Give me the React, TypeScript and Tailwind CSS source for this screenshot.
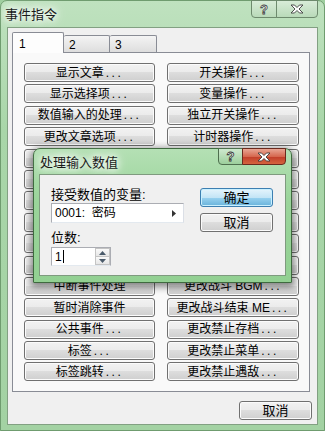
import React from "react";

const left = [
  "显示文章...",
  "显示选择项...",
  "数值输入的处理...",
  "更改文章选项...",
  "按键输入的处理...",
  "等待...",
  "注释...",
  "条件分歧...",
  "循环",
  "中断循环",
  "中断事件处理",
  "暂时消除事件",
  "公共事件...",
  "标签...",
  "标签跳转...",
];
const right = [
  "开关操作...",
  "变量操作...",
  "独立开关操作...",
  "计时器操作...",
  "增减金钱...",
  "增减物品...",
  "增减武器...",
  "增减防具...",
  "替换队员...",
  "更改窗口外观...",
  "更改战斗 BGM...",
  "更改战斗结束 ME...",
  "更改禁止存档...",
  "更改禁止菜单...",
  "更改禁止遇敌...",
];

function Label({ text }: { text: string }) {
  if (text.endsWith("...")) {
    return (
      <span className="whitespace-nowrap">
        {text.slice(0, -3)}
        <span className="tracking-[2.5px] ml-[2px]">...</span>
      </span>
    );
  }
  return <span className="whitespace-nowrap">{text}</span>;
}

function Btn({ text, className = "" }: { text: string; className?: string }) {
  return (
    <div
      className={
        "flex items-center justify-center rounded-[3px] border border-[#707070] bg-[linear-gradient(#f2f2f2_0%,#ebebeb_48%,#dddddd_50%,#cfcfcf_100%)] shadow-[inset_0_0_0_1px_#fbfbfb] text-[12px] leading-none text-black " +
        className
      }
    >
      <Label text={text} />
    </div>
  );
}

function XIcon({ w, h }: { w: number; h: number }) {
  return (
    <svg width={w} height={h} viewBox="0 0 14 10">
      <polygon
        points="1,1 4.5,1 7,3.5 9.5,1 13,1 9,5 13,9 9.5,9 7,6.5 4.5,9 1,9 5,5"
        fill="#ffffff"
        stroke="#3d3d3d"
        strokeWidth="0.9"
        strokeLinejoin="round"
      />
    </svg>
  );
}

function Tri({ dir }: { dir: "up" | "down" | "right" }) {
  if (dir === "right")
    return (
      <svg width="4" height="7" viewBox="0 0 4 7">
        <polygon points="0,0 4,3.5 0,7" fill="#333" />
      </svg>
    );
  return (
    <svg width="7" height="4" viewBox="0 0 7 4">
      <polygon points={dir === "up" ? "0,4 3.5,0 7,4" : "0,0 7,0 3.5,4"} fill="#4a5a6a" />
    </svg>
  );
}

export default function App() {
  return (
    <div className="relative w-[325px] h-[431px] overflow-hidden bg-[#9fcf9f] font-['Liberation_Sans','Noto_Sans_CJK_SC',sans-serif]">
      {/* Outer window */}
      <div className="flex flex-col w-full h-full rounded-t-[7px] border border-[#6f9c6f] bg-[linear-gradient(180deg,#bfe2bf_0%,#a9d6a9_30%,#a3d2a3_100%)] px-[6px] pb-[5px]">
        {/* title bar */}
        <div className="flex h-[26px] shrink-0">
          <div className="pl-[-2px] -ml-[2px] pt-[6px] text-[13px] leading-[16px] text-[#1a1a1a] [text-shadow:0_0_6px_#ffffff,0_0_10px_#ffffff,0_0_14px_#ffffff]">
            事件指令
          </div>
          <div className="ml-auto -mt-[1px] flex h-[18px]">
            <div className="flex w-[26px] items-center justify-center rounded-bl-[4px] border border-[#6d8a6d] bg-[linear-gradient(#d8ecd8,#b9dab9)] text-[13px] font-bold leading-none text-white [-webkit-text-stroke:0.8px_#444]">
              ?
            </div>
            <div className="-ml-[1px] flex w-[42px] items-center justify-center rounded-br-[4px] border border-[#6d8a6d] bg-[linear-gradient(#d8ecd8,#b9dab9)]">
              <XIcon w={14} h={10} />
            </div>
          </div>
        </div>
        {/* client */}
        <div className="flex flex-1 flex-col border border-[#82a082] bg-[#f0f0f0] pl-[4px]">
          {/* tabs */}
          <div className="mt-[4px] flex h-[21px] items-end text-[12px] leading-none text-black">
            <div className="relative z-10 h-[21px] w-[52px] rounded-t-[2px] border border-b-0 border-[#898c95] bg-[#fdfdfd] pl-[6px] pt-[5px]">
              1
            </div>
            <div className="h-[18px] w-[46px] rounded-t-[2px] border border-l-0 border-b-0 border-[#898c95] bg-[linear-gradient(#f4f4f4,#dcdcdc)] pl-[5px] pt-[3px]">
              2
            </div>
            <div className="h-[18px] w-[47px] rounded-t-[2px] border border-l-0 border-b-0 border-[#898c95] bg-[linear-gradient(#f4f4f4,#dcdcdc)] pl-[5px] pt-[3px]">
              3
            </div>
          </div>
          {/* panel */}
          <div className="relative -mt-[1px] h-[340px] w-[298px] border border-[#898c95] bg-[#f9f9f9] pl-[11px] pt-[10px]">
            <div className="grid grid-cols-[131px_132px] gap-x-[12px] gap-y-[2.4px]">
              {left.map((l, i) => (
                <React.Fragment key={i}>
                  <Btn text={l} className="h-[19px]" />
                  <Btn text={right[i]} className="h-[19px]" />
                </React.Fragment>
              ))}
            </div>
          </div>
          <div className="mt-[9px] flex justify-end pr-[5px]">
            <Btn text="取消" className="h-[19px] w-[73px] text-[13px]" />
          </div>
        </div>
      </div>

      {/* Dialog */}
      <div className="absolute left-[33px] top-[148px] flex h-[135px] w-[259px] flex-col rounded-t-[7px] border border-[#3f6a3f] bg-[linear-gradient(180deg,#b4e0b4_0%,#9ad49a_40%,#92d092_100%)] px-[5px] pb-[6px] shadow-[0_2px_7px_2px_rgba(0,0,0,0.45)]">
        <div className="flex h-[25px] shrink-0">
          <div className="pl-[1px] pt-[6px] text-[13px] leading-[16px] text-[#1a1a1a] [text-shadow:0_0_6px_#ffffff,0_0_10px_#ffffff,0_0_14px_#ffffff]">
            处理输入数值
          </div>
          <div className="ml-auto -mt-[1px] flex h-[17px]">
            <div className="flex w-[25px] items-center justify-center rounded-bl-[4px] border border-[#4f6f4f] bg-[linear-gradient(#cfe9cf,#9ccf9c)] text-[13px] font-bold leading-none text-white [-webkit-text-stroke:0.8px_#333]">
              ?
            </div>
            <div className="-ml-[1px] flex w-[44px] items-center justify-center rounded-br-[4px] border border-[#6b2a1e] bg-[linear-gradient(#e8a593_0%,#d6684f_50%,#c2402a_55%,#d5643f_100%)]">
              <XIcon w={14} h={10} />
            </div>
          </div>
        </div>
        <div className="flex flex-1 border border-[#7f9a7f] bg-[#f0f0f0] text-[13px] leading-none text-black">
          <div className="ml-[11px] flex w-[133px] flex-col pt-[12px]">
            <div className="h-[16px] leading-[16px]">接受数值的变量:</div>
            <div className="flex h-[20px] items-center border border-[#abadb3] border-b-[#e3e9ef] border-r-[#dbdfe6] bg-white pl-[3px] pr-[7px] text-[12px]">
              <span>0001:&nbsp;&nbsp;密码</span>
              <span className="ml-auto flex">
                <Tri dir="right" />
              </span>
            </div>
            <div className="mt-[7px] h-[16px] leading-[16px]">位数:</div>
            <div className="mt-[1px] flex h-[19px] w-[60px] border border-[#abadb3] border-b-[#e3e9ef] bg-white">
              <div className="flex flex-1 items-center pl-[3px] text-[12px]">
                1<span className="ml-[1px] inline-block h-[13px] w-[1px] bg-black" />
              </div>
              <div className="flex w-[15px] flex-col">
                <div className="flex flex-1 items-center justify-center border border-[#c4c4c4] bg-[linear-gradient(#fafafa,#e6e6e6)]">
                  <Tri dir="up" />
                </div>
                <div className="flex flex-1 items-center justify-center border border-t-0 border-[#c4c4c4] bg-[linear-gradient(#fafafa,#e6e6e6)]">
                  <Tri dir="down" />
                </div>
              </div>
            </div>
          </div>
          <div className="ml-[16px] flex flex-col gap-[6px] pt-[13px]">
            <div className="flex h-[19px] w-[73px] items-center justify-center rounded-[3px] border border-[#3c7fb1] bg-[linear-gradient(#e5f4fc_0%,#c4e5f6_50%,#98d1ef_52%,#68b3db_100%)] shadow-[inset_0_0_0_1px_#c9f0ff] text-[13px]">
              确定
            </div>
            <Btn text="取消" className="h-[19px] w-[73px] text-[13px]" />
          </div>
        </div>
      </div>
    </div>
  );
}
